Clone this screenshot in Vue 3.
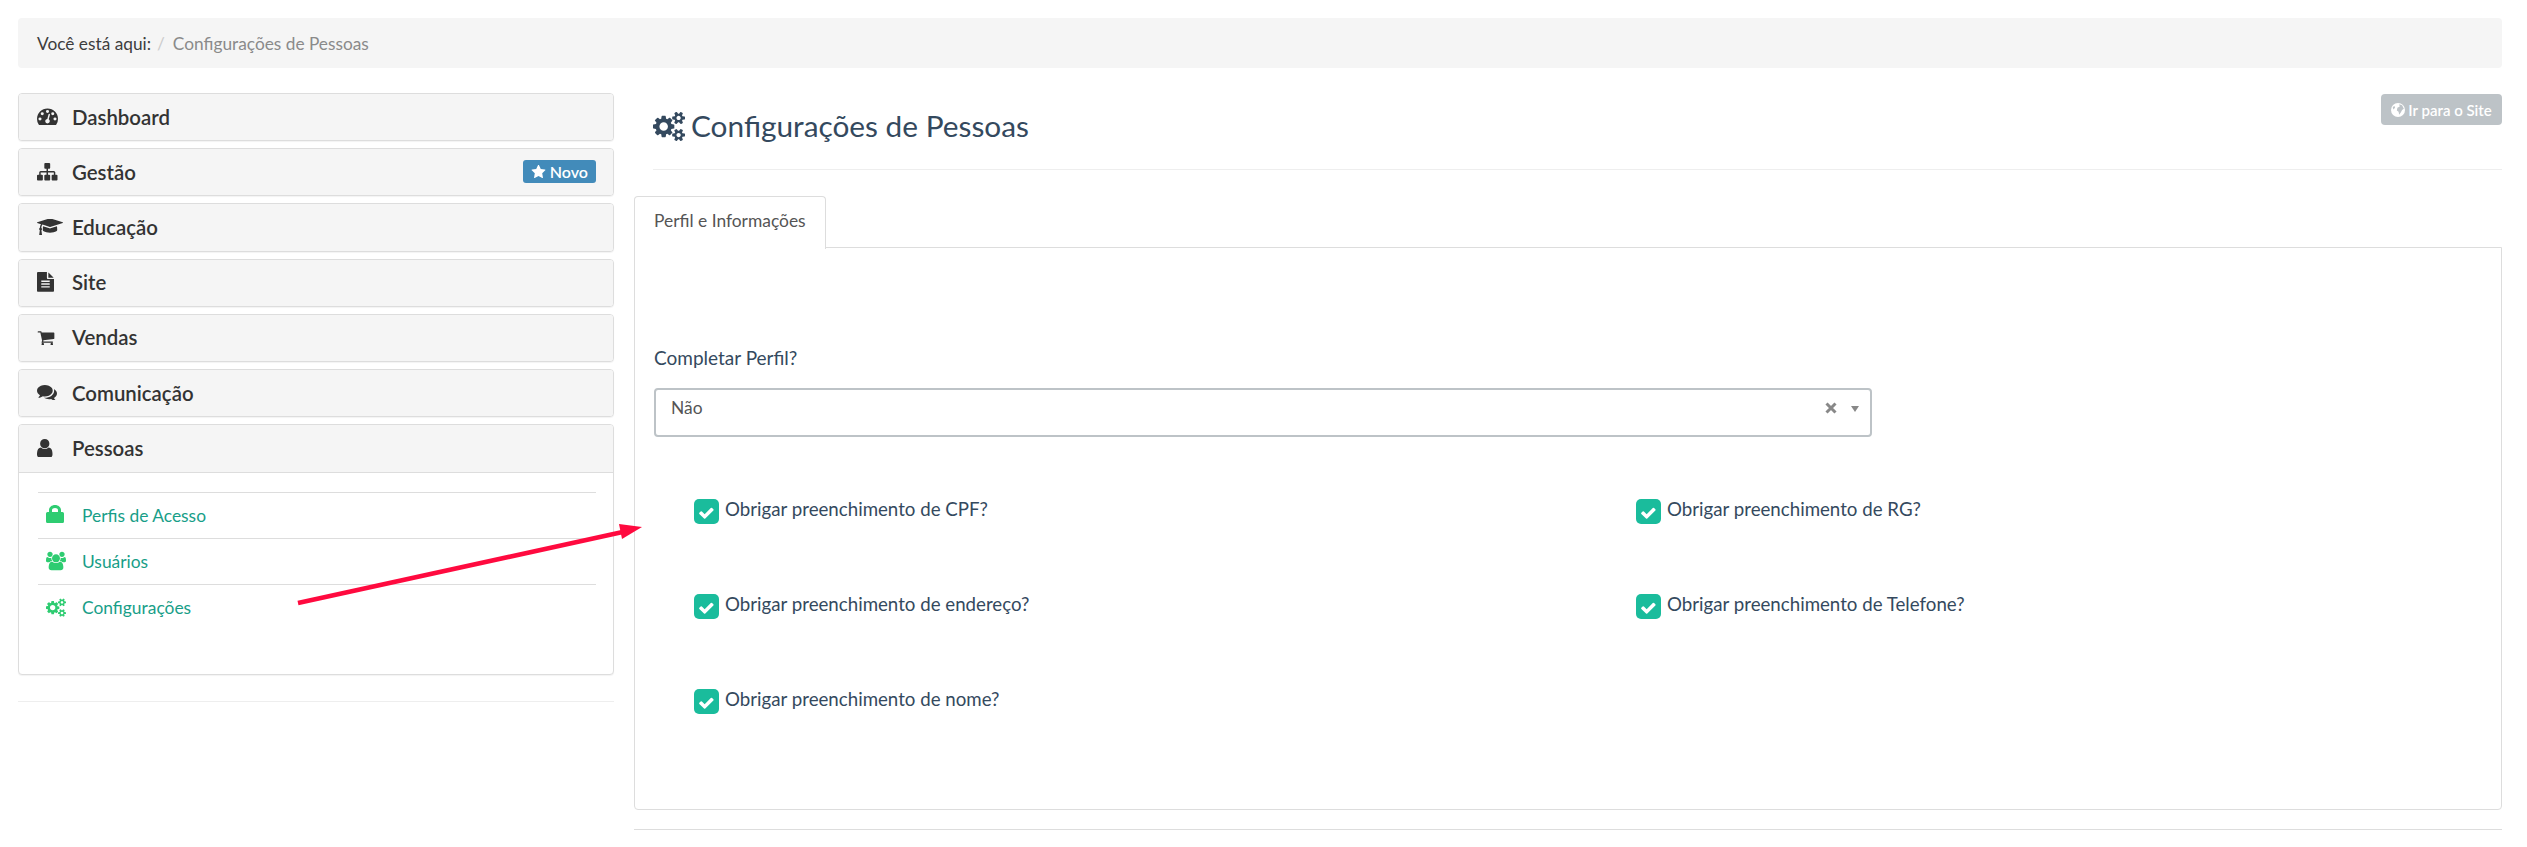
<script setup>
const gears = "M896 896q0-106-75-181t-181-75-181 75-75 181 75 181 181 75 181-75 75-181zm768 512q0-52-38-90t-90-38-90 38-38 90q0 53 37.500 90.500t90.500 37.500 90.500-37.500 37.500-90.500zm0-1024q0-52-38-90t-90-38-90 38-38 90q0 53 37.500 90.500t90.500 37.500 90.500-37.500 37.500-90.500zm-384 421v185q0 10-7 19.500t-16 10.500l-155 24q-11 35-32 76 34 48 90 115 7 11 7 20 0 12-7 19-23 30-82.500 89.500t-78.500 59.500q-11 0-21-7l-115-90q-37 19-77 31-11 108-23 155-7 24-30 24h-186q-11 0-20-7.500t-10-17.500l-23-153q-34-10-75-31l-118 89q-7 7-20 7-11 0-21-8-144-133-144-160 0-9 7-19 10-14 41-53t47-61q-23-44-35-82l-152-24q-10-1-17-9.500t-7-19.500v-185q0-10 7-19.500t16-10.500l155-24q11-35 32-76-34-48-90-115-7-11-7-20 0-12 7-20 22-30 82-89t79-59q11 0 21 7l115 90q34-18 77-32 11-108 23-154 7-24 30-24h186q11 0 20 7.500t10 17.500l23 153q34 10 75 31l118-89q8-7 20-7 11 0 21 8 144 133 144 160 0 8-7 19-12 16-42 54t-45 60q23 48 34 82l152 23q10 2 17 10.500t7 19.500zm640 533v140q0 16-149 31-12 27-30 52 51 113 51 138 0 4-4 7-122 71-124 71-8 0-46-47t-52-68q-20 2-30 2t-30-2q-14 21-52 68t-46 47q-2 0-124-71-4-3-4-7 0-25 51-138-18-25-30-52-149-15-149-31v-140q0-16 149-31 13-29 30-52-51-113-51-138 0-4 4-7 4-2 35-20t59-34 30-16q8 0 46 46.500t52 67.500q20-2 30-2t30 2q51-71 92-112l6-2q4 0 124 70 4 3 4 7 0 25-51 138 17 23 30 52 149 15 149 31zm0-1024v140q0 16-149 31-12 27-30 52 51 113 51 138 0 4-4 7-122 71-124 71-8 0-46-47t-52-68q-20 2-30 2t-30-2q-14 21-52 68t-46 47q-2 0-124-71-4-3-4-7 0-25 51-138-18-25-30-52-149-15-149-31v-140q0-16 149-31 13-29 30-52-51-113-51-138 0-4 4-7 4-2 35-20t59-34 30-16q8 0 46 46.500t52 67.500q20-2 30-2t30 2q51-71 92-112l6-2q4 0 124 70 4 3 4 7 0 25-51 138 17 23 30 52 149 15 149 31z"
const icons = {
  dashboard: { box: "0 256 1792 1408", d: "M384 1184q0-53-37.500-90.500t-90.500-37.500-90.500 37.500-37.500 90.500 37.500 90.500 90.500 37.500 90.500-37.500 37.500-90.500zm192-448q0-53-37.500-90.500t-90.500-37.500-90.500 37.500-37.500 90.500 37.500 90.500 90.500 37.500 90.500-37.500 37.500-90.500zm428 481l101-382q6-26-7.500-48.500t-38.500-29.500-48 6.500-30 39.500l-101 382q-60 5-107 43.500t-63 98.500q-20 77 20 146t117 89 146-20 89-117q16-60-6-117t-72-91zm660-33q0-53-37.500-90.500t-90.500-37.500-90.500 37.500-37.500 90.500 37.500 90.500 90.500 37.500 90.500-37.500 37.500-90.500zm-640-640q0-53-37.500-90.500t-90.500-37.500-90.500 37.500-37.500 90.500 37.500 90.500 90.500 37.500 90.500-37.500 37.500-90.500zm448 192q0-53-37.500-90.500t-90.500-37.500-90.500 37.500-37.500 90.500 37.500 90.500 90.500 37.500 90.500-37.500 37.500-90.500zm320 448q0 261-141 483-19 29-54 29h-1402q-35 0-54-29-141-221-141-483 0-182 71-348t191-286 286-191 348-71 348 71 286 191 191 286 71 348z" },
  sitemap: { box: "0 128 1792 1536", d: "M1792 1248v320q0 40-28 68t-68 28h-320q-40 0-68-28t-28-68v-320q0-40 28-68t68-28h96v-192h-512v192h96q40 0 68 28t28 68v320q0 40-28 68t-68 28h-320q-40 0-68-28t-28-68v-320q0-40 28-68t68-28h96v-192h-512v192h96q40 0 68 28t28 68v320q0 40-28 68t-68 28h-320q-40 0-68-28t-28-68v-320q0-40 28-68t68-28h96v-192q0-52 38-90t90-38h512v-192h-96q-40 0-68-28t-28-68v-320q0-40 28-68t68-28h320q40 0 68 28t28 68v320q0 40-28 68t-68 28h-96v192h512q52 0 90 38t38 90v192h96q40 0 68 28t28 68z" },
  cap: { box: "0 192 2304 1472", d: "M1774 836l18 316q4 69-82 128t-235 93.500-323 34.500-323-34.500-235-93.500-82-128l18-316 574 181q22 7 48 7t48-7zm530-324q0 23-22 31l-1120 352q-4 1-10 1t-10-1l-652-206q-43 34-71 111.500t-34 178.500q63 36 63 109 0 69-58 107l58 433q2 14-8 25-9 11-24 11h-192q-15 0-24-11-10-11-8-25l58-433q-58-38-58-107 0-73 65-111 11-207 98-330l-333-104q-22-8-22-31t22-31l1120-352q4-1 10-1t10 1l1120 352q22 8 22 31z" },
  file: { box: "128 0 1536 1792", d: "M1596 476q14 14 28 36h-472v-472q22 14 36 28zm-476 164h544v1056q0 40-28 68t-68 28h-1344q-40 0-68-28t-28-68v-1600q0-40 28-68t68-28h800v544q0 40 28 68t68 28zm160 736v-64q0-14-9-23t-23-9h-704q-14 0-23 9t-9 23v64q0 14 9 23t23 9h704q14 0 23-9t9-23zm0-256v-64q0-14-9-23t-23-9h-704q-14 0-23 9t-9 23v64q0 14 9 23t23 9h704q14 0 23-9t9-23zm0-256v-64q0-14-9-23t-23-9h-704q-14 0-23 9t-9 23v64q0 14 9 23t23 9h704q14 0 23-9t9-23z" },
  cart: { box: "0 128 1792 1536", d: "M704 1536q0 52-38 90t-90 38-90-38-38-90 38-90 90-38 90 38 38 90zm896 0q0 52-38 90t-90 38-90-38-38-90 38-90 90-38 90 38 38 90zm128-1088v512q0 24-16.500 42.500t-40.500 21.500l-1044 122q13 60 13 70 0 16-24 64h920q26 0 45 19t19 45-19 45-45 19h-1024q-26 0-45-19t-19-45q0-11 8-31.500t16-36 21.500-40 15.500-29.500l-177-823h-204q-26 0-45-19t-19-45 19-45 45-19h256q16 0 28.500 6.500t19.500 15.500 13 24.500 8 26 5.500 29.500 4.500 26h1201q26 0 45 19t19 45z" },
  comments: { box: "0 256 1792 1408", d: "M1408 768q0 139-94 257t-256.500 186.500-353.500 68.500q-86 0-176-16-124 88-278 128-36 9-86 16h-3q-11 0-20.500-8t-11.500-21q-1-3-1-6.500t.5-6.500 2-6l2.500-5 3.500-5.500 4-5 4.500-5 4-4.500q5-6 23-25t26-29.500 22.500-29 25-38.500 20.500-44q-124-72-195-177t-71-224q0-139 94-257t256.500-186.500 353.500-68.500 353.500 68.500 256.500 186.500 94 257zm384 256q0 120-71 224.500t-195 176.500q10 24 20.500 44t25 38.500 22.500 29 26 29.500 23 25q1 1 4 4.500t4.500 5 4 5 3.500 5.500l2.500 5 2 6 .5 6.500-1 6.500q-3 14-13 22t-22 7q-50-7-86-16-154-40-278-128-90 16-176 16-271 0-472-132 58 4 88 4 161 0 309-45t264-129q125-92 192-212t67-254q0-77-23-152 129 71 204 178t75 230z" },
  user: { box: "256 128 1280 1536", d: "M1536 1399q0 109-62.500 187t-150.500 78h-854q-88 0-150.500-78t-62.500-187q0-85 8.500-160.500t31.500-152 58.500-131 94-89 134.500-34.500q131 128 313 128t313-128q76 0 134.500 34.500t94 89 58.500 131 31.500 152 8.500 160.500zm-256-887q0 159-112.500 271.500t-271.500 112.500-271.500-112.500-112.500-271.500 112.500-271.500 271.500-112.500 271.500 112.500 112.500 271.500z" },
  lock: { box: "0 2 18 18", d: "M3 7V5C3 2.200 5.700 0 9 0s6 2.200 6 5v2h-3V5c0-1.200-1.300-2-3-2S6 3.800 6 5v2zM1.500 7h15A1.500 1.500 0 0 1 18 8.500v8a1.500 1.500 0 0 1-1.500 1.500h-15A1.500 1.500 0 0 1 0 16.500v-8A1.500 1.500 0 0 1 1.500 7z" },
  users: { box: "0 128 1920 1664", d: "M593 896q-162 5-265 128h-134q-82 0-138-40.500t-56-118.500q0-353 124-353 6 0 43.500 21t97.500 42.500 119 21.500q67 0 133-23-5 37-5 66 0 139 81 256zm1071 637q0 120-73 189.500t-194 69.500h-874q-121 0-194-69.500t-73-189.500q0-53 3.500-103.500t14-109 26.500-108.500 43-97.500 62-81 85.500-53.500 111.500-20q10 0 43 21.500t73 48 107 48 135 21.500 135-21.500 107-48 73-48 43-21.500q61 0 111.500 20t85.500 53.500 62 81 43 97.500 26.500 108.500 14 109 3.500 103.500zm-1024-1277q0 106-75 181t-181 75-181-75-75-181 75-181 181-75 181 75 75 181zm704 384q0 159-112.500 271.500t-271.500 112.500-271.500-112.500-112.500-271.500 112.500-271.500 271.500-112.500 271.500 112.500 112.500 271.500zm576 225q0 78-56 118.500t-138 40.500h-134q-103-123-265-128 81-117 81-256 0-29-5-66 66 23 133 23 59 0 119-21.500t97.500-42.500 43.500-21q124 0 124 353zm-128-609q0 106-75 181t-181 75-181-75-75-181 75-181 181-75 181 75 75 181z" },
  cogs: { box: "0 64 1920 1664", d: gears },
}
const closed = [
  { label: "Dashboard", icon: "dashboard", w: 21 },
  { label: "Gestão", icon: "sitemap", w: 20.500, badge: true },
  { label: "Educação", icon: "cap", w: 26 },
  { label: "Site", icon: "file", w: 17 },
  { label: "Vendas", icon: "cart", w: 18 },
  { label: "Comunicação", icon: "comments", w: 20 },
]
const links = [
  { label: "Perfis de Acesso", icon: "lock", w: 18 },
  { label: "Usuários", icon: "users", w: 20 },
  { label: "Configurações", icon: "cogs", w: 20 },
]
const checks = [
  "Obrigar preenchimento de CPF?",
  "Obrigar preenchimento de RG?",
  "Obrigar preenchimento de endereço?",
  "Obrigar preenchimento de Telefone?",
  "Obrigar preenchimento de nome?",
]
const star = "M1728 647q0 22-26 48l-363 354 86 500q1 7 1 20 0 21-10.500 35.500t-30.500 14.500q-19 0-40-12l-449-236-449 236q-22 12-40 12-21 0-31.500-14.500t-10.500-35.500q0-6 2-20l86-500-364-354q-25-27-25-48 0-37 56-46l502-73 225-455q19-41 49-41t49 41l225 455 502 73q56 9 56 46z"
const check = "M1671 566q0 40-28 68l-724 724-136 136q-28 28-68 28t-68-28l-136-136-362-362q-28-28-28-68t28-68l136-136q28-28 68-28t68 28l294 295 656-657q28-28 68-28t68 28l136 136q28 28 28 68z"
</script>

<template>
  <div class="page">
    <nav class="crumb">
      <span class="crumb-here">Você está aqui:</span>
      <span class="crumb-sep">/</span>
      <span class="crumb-cur">Configurações de Pessoas</span>
    </nav>

    <div class="columns">
      <aside class="side">
        <div class="acc-list">
          <div v-for="p in closed" :key="p.label" class="panel">
            <div class="panel-head">
              <span class="head-icon">
                <svg :viewBox="icons[p.icon].box" :style="{ width: p.w + 'px' }" class="ic-dark"><path :d="icons[p.icon].d" /></svg>
              </span>
              <span class="head-text">{{ p.label }}</span>
              <span v-if="p.badge" class="badge">
                <svg viewBox="0 128 1792 1536" class="badge-star"><path :d="star" /></svg>Novo
              </span>
            </div>
          </div>
          <div class="panel">
            <div class="panel-head open">
              <span class="head-icon">
                <svg :viewBox="icons.user.box" class="ic-dark" :style="{ width: '15.5px' }"><path :d="icons.user.d" /></svg>
              </span>
              <span class="head-text">Pessoas</span>
            </div>
            <ul class="panel-body">
              <li v-for="l in links" :key="l.label" class="link-row">
                <span class="link-icon">
                  <svg :viewBox="icons[l.icon].box" class="ic-green" :style="{ width: l.w + 'px' }"><path :d="icons[l.icon].d" /></svg>
                </span>
                <a class="link-text">{{ l.label }}</a>
              </li>
            </ul>
          </div>
        </div>
        <hr class="side-rule" />
      </aside>

      <main class="main">
        <header class="title-row">
          <h1 class="title">
            <svg viewBox="0 32 1920 1728" class="title-ic"><path :d="gears" /></svg>
            <span>Configurações de Pessoas</span>
          </h1>
          <a class="site-btn">
            <svg viewBox="0 0 24 24" class="globe">
              <circle cx="12" cy="12" r="12" fill="#fff" />
              <path d="M14 2l5 2 3 6-3 2-2 4-3 4-1-5-3-2 1-5 4-2zM3 7l3-2 1 3-3 3z" fill="#bdc3c7" />
            </svg>
            Ir para o Site
          </a>
        </header>

        <div class="tabs"><div class="tab">Perfil e Informações</div></div>

        <section class="tab-body">
          <label class="field-label">Completar Perfil?</label>
          <div class="select">
            <span class="select-value">Não</span>
            <svg class="select-x" viewBox="0 0 12 12"><path d="M1.500 1.500l9 9M10.500 1.500l-9 9" /></svg>
            <span class="select-caret"></span>
          </div>
          <div class="check-grid">
            <label v-for="c in checks" :key="c" class="check-item">
              <span class="box">
                <svg viewBox="128 256 1568 1280" class="tick"><path :d="check" /></svg>
              </span>
              <span class="check-text">{{ c }}</span>
            </label>
          </div>
        </section>
        <hr class="main-rule" />
      </main>
    </div>

    <svg class="arrow" width="2527" height="847" viewBox="0 0 2527 847">
      <line x1="298" y1="603" x2="625" y2="531.500" stroke="#ff0a3f" stroke-width="4.500" />
      <polygon points="642,527 619,524 622,539" fill="#ff0a3f" />
    </svg>
  </div>
</template>

<style>
html, body { margin: 0; background: #fff; }
</style>

<style scoped>
.page {
  position: relative;
  box-sizing: border-box;
  width: 2527px;
  height: 847px;
  overflow: hidden;
  padding: 18px 25px 0 18px;
  font-family: Lato, "Open Sans", sans-serif;
  color: #34495e;
}
.crumb {
  display: flex;
  align-items: center;
  height: 50px;
  padding: 0 19px;
  background: #f5f5f5;
  border-radius: 4px;
  font-size: 17.300px;
}
.crumb-here { color: #3d3d3d; }
.crumb-sep { color: #ccc; margin: 0 8px 0 6px; }
.crumb-cur { color: #8a8a8a; }
.columns {
  display: grid;
  grid-template-columns: 596px 1fr;
  column-gap: 20px;
  margin-top: 25px;
}
.acc-list { display: flex; flex-direction: column; gap: 7px; }
.panel {
  border: 1px solid #ddd;
  border-radius: 4px;
  background: #fff;
  box-shadow: 0 1px 1px rgba(0, 0, 0, 0.05);
  overflow: hidden;
}
.panel-head {
  display: flex;
  align-items: center;
  box-sizing: border-box;
  height: 46.200px;
  padding: 0 17px 1px 18px;
  background: #f5f5f5;
}
.panel-head.open { border-bottom: 1px solid #ddd; height: 48px; }
.head-icon { display: flex; align-items: center; width: 35px; flex: none; }
.ic-dark { fill: #333; display: block; }
.head-text { font-size: 20.400px; font-weight: 600; color: #333; flex: 1; }
.badge {
  display: flex;
  align-items: center;
  box-sizing: border-box;
  height: 23px;
  padding: 0 8px;
  background: #428bba;
  border-radius: 3px;
  color: #fff;
  font-size: 16px;
  font-weight: 600;
}
.badge-star { width: 15px; height: 14px; fill: #fff; margin-right: 4px; }
.panel-body { list-style: none; margin: 0; padding: 19px 17px 44px 19px; }
.link-row {
  display: flex;
  align-items: center;
  height: 46px;
  border-top: 1px solid #ddd;
  box-sizing: border-box;
  padding-left: 8px;
}
.link-icon { width: 36px; flex: none; display: flex; align-items: center; }
.ic-green { fill: #2ecc71; display: block; overflow: visible; }
.link-text { font-size: 17.400px; color: #189e88; }
.side-rule { margin: 26px 0 0; border: 0; border-top: 1px solid #eee; }
.title-row {
  position: relative;
  height: 77px;
  margin-left: 19px;
  border-bottom: 1px solid #eee;
  box-sizing: border-box;
}
.title {
  display: flex;
  align-items: center;
  gap: 6px;
  margin: 0;
  padding-top: 15px;
  font-size: 29.800px;
  font-weight: 400;
  line-height: 36px;
  color: #34495e;
}
.title-ic { width: 32px; height: 29px; fill: #34495e; }
.site-btn {
  position: absolute;
  right: 0;
  top: 1px;
  display: flex;
  align-items: center;
  justify-content: center;
  gap: 3px;
  box-sizing: border-box;
  width: 121px;
  height: 31px;
  background: #bdc3c7;
  border-radius: 4px;
  color: #fff;
  font-size: 15px;
  font-weight: 600;
}
.globe { width: 14px; height: 14px; }
.tabs {
  display: flex;
  margin-top: 26px;
  height: 52px;
  box-sizing: border-box;
  margin-bottom: -1px;
  position: relative;
}
.tab {
  position: relative;
  z-index: 1;
  box-sizing: border-box;
  width: 192px;
  height: 53px;
  padding: 0 19px;
  line-height: 48px;
  border: 1px solid #ddd;
  border-bottom: 0;
  border-radius: 4px 4px 0 0;
  background: #fff;
  font-size: 17.400px;
  color: #555;
}
.tab-body {
  box-sizing: border-box;
  height: 563px;
  border: 1px solid #ddd;
  border-radius: 0 0 4px 4px;
  padding: 98px 19px 0;
}
.field-label { display: block; font-size: 19px; line-height: 24px; color: #34495e; }
.select {
  position: relative;
  display: flex;
  align-items: flex-start;
  box-sizing: border-box;
  width: 1218px;
  height: 49px;
  margin-top: 18px;
  border: 2px solid #bdc3c7;
  border-radius: 4px;
  padding: 7px 15px;
  font-size: 17.400px;
  color: #555;
}
.select-value { flex: 1; line-height: 22px; }
.select-x {
  position: absolute;
  right: 33px;
  top: 12px;
  width: 12px;
  height: 12px;
  fill: none;
  stroke: #888;
  stroke-width: 3px;
}
.select-caret {
  position: absolute;
  right: 11px;
  top: 16px;
  border-left: 4.500px solid transparent;
  border-right: 4.500px solid transparent;
  border-top: 6px solid #888;
}
.check-grid {
  display: grid;
  grid-template-columns: 942px 1fr;
  grid-auto-rows: 95px;
  margin: 62px 0 0 40px;
}
.check-item { display: flex; align-items: flex-start; gap: 6px; }
.box {
  display: flex;
  align-items: center;
  justify-content: center;
  width: 25px;
  height: 25px;
  background: #1abc9c;
  border-radius: 5px;
  flex: none;
}
.tick { width: 15px; height: 12px; fill: #fff; margin-top: 2px; }
.check-text { font-size: 18.700px; line-height: 22px; margin-top: -1px; color: #34495e; }
.main-rule { margin: 19px 0 0; border: 0; border-top: 1px solid #ddd; }
.arrow { position: absolute; left: 0; top: 0; pointer-events: none; }
</style>
